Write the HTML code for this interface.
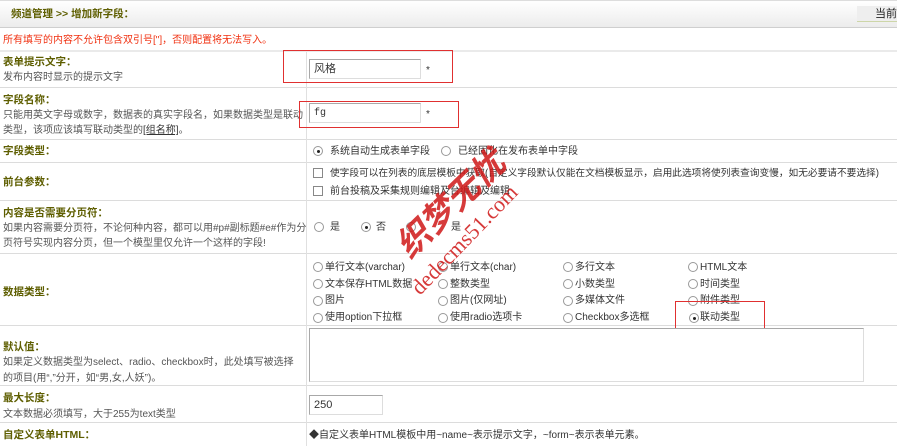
<!DOCTYPE html>
<html><head><meta charset="utf-8">
<style>
*{margin:0;padding:0;box-sizing:border-box}
body{width:906px;height:446px;background:#fff;font-family:"Liberation Sans","Noto Sans CJK SC",sans-serif;font-size:10px;color:#333;position:relative;overflow:hidden}
.a{position:absolute;white-space:nowrap;line-height:13px}
.t{color:#5e5e00;font-weight:bold;font-size:10.5px}
.d{color:#555}
.hl{position:absolute;left:0;width:897px;height:1px;background:#dcdcdc}
.vl{position:absolute;left:306px;width:1px;background:#e0e0e0}
.inp{position:absolute;border:1px solid #a8a8a8;border-right-color:#ddd;border-bottom-color:#ddd;background:#fff;font-size:11px;padding-left:4px;line-height:19px}
.r{position:absolute;width:10px;height:10px;border:1px solid #999;border-radius:50%;background:#fff}
.r.on::after{content:"";position:absolute;left:3px;top:3px;width:3px;height:3px;background:#222;border-radius:50%}
.c{position:absolute;width:10px;height:10px;border:1px solid #888;background:#fff}
.box{position:absolute;border:1px solid #e03030}
</style></head><body>
<div class="a" style="left:0;top:0;width:897px;height:28px;background:linear-gradient(#fff,#ececec);border-top:1px solid #ddd;border-bottom:1px solid #cfcfcf"></div>
<div class="a t" style="left:11px;top:8px">频道管理 &gt;&gt; 增加新字段：</div>
<div class="a" style="left:857px;top:6px;width:40px;height:16px;background:#eee;border-bottom:1px solid #cdd6a8;text-align:right;font-size:11px;color:#222;line-height:16px">当前</div>
<div class="a" style="left:3px;top:34px;color:#f03010">所有填写的内容不允许包含双引号["]，否则配置将无法写入。</div>
<div class="hl" style="top:50px;height:2px;background:#eaeaea"></div>
<div class="hl" style="top:87px"></div>
<div class="hl" style="top:139px"></div>
<div class="hl" style="top:162px"></div>
<div class="hl" style="top:200px"></div>
<div class="hl" style="top:253px"></div>
<div class="hl" style="top:325px"></div>
<div class="hl" style="top:385px"></div>
<div class="hl" style="top:422px"></div>
<div class="vl" style="top:52px;height:394px"></div>

<div class="a t" style="left:3px;top:56px">表单提示文字：</div>
<div class="a d" style="left:3px;top:71px">发布内容时显示的提示文字</div>
<div class="inp" style="left:309px;top:59px;width:112px;height:20px">风格</div>
<div class="a" style="left:426px;top:64px">*</div>
<div class="box" style="left:283px;top:50px;width:170px;height:33px"></div>

<div class="a t" style="left:3px;top:94px">字段名称：</div>
<div class="a d" style="left:3px;top:109px">只能用英文字母或数字，数据表的真实字段名，如果数据类型是联动</div>
<div class="a d" style="left:3px;top:124px">类型，该项应该填写联动类型的<u style="color:#333">[组名称]</u>。</div>
<div class="inp" style="left:309px;top:103px;width:112px;height:20px;font-family:'Liberation Mono',monospace;font-size:10px">fg</div>
<div class="a" style="left:426px;top:108px">*</div>
<div class="box" style="left:299px;top:101px;width:160px;height:27px"></div>

<div class="a t" style="left:3px;top:145px">字段类型：</div>
<div class="r on" style="left:313px;top:146px"></div><div class="a" style="left:330px;top:145px">系统自动生成表单字段</div>
<div class="r" style="left:441px;top:146px"></div><div class="a" style="left:458px;top:145px">已经固化在发布表单中字段</div>

<div class="a t" style="left:3px;top:176px">前台参数：</div>
<div class="c" style="left:313px;top:168px"></div><div class="a" style="left:330px;top:167px;font-size:9.7px">使字段可以在列表的底层模板中获取(自定义字段默认仅能在文档模板显示，启用此选项将使列表查询变慢，如无必要请不要选择)</div>
<div class="c" style="left:313px;top:186px"></div><div class="a" style="left:330px;top:185px">前台投稿及采集规则编辑及台编辑及编辑</div>

<div class="a t" style="left:3px;top:207px">内容是否需要分页符：</div>
<div class="a d" style="left:3px;top:222px">如果内容需要分页符，不论何种内容，都可以用#p#副标题#e#作为分</div>
<div class="a d" style="left:3px;top:237px">页符号实现内容分页，但一个模型里仅允许一个这样的字段!</div>
<div class="r" style="left:314px;top:222px"></div><div class="a" style="left:330px;top:221px">是</div>
<div class="r on" style="left:361px;top:222px"></div><div class="a" style="left:376px;top:221px">否</div>
<div class="r" style="left:406px;top:222px"></div><div class="a" style="left:451px;top:221px">是</div>

<div class="a t" style="left:3px;top:286px">数据类型：</div>
<div class="r" style="left:313px;top:262px"></div><div class="a" style="left:325px;top:261px">单行文本(varchar)</div>
<div class="r" style="left:438px;top:262px"></div><div class="a" style="left:450px;top:261px">单行文本(char)</div>
<div class="r" style="left:563px;top:262px"></div><div class="a" style="left:575px;top:261px">多行文本</div>
<div class="r" style="left:688px;top:262px"></div><div class="a" style="left:700px;top:261px">HTML文本</div>
<div class="r" style="left:313px;top:279px"></div><div class="a" style="left:325px;top:278px">文本保存HTML数据</div>
<div class="r" style="left:438px;top:279px"></div><div class="a" style="left:450px;top:278px">整数类型</div>
<div class="r" style="left:563px;top:279px"></div><div class="a" style="left:575px;top:278px">小数类型</div>
<div class="r" style="left:688px;top:279px"></div><div class="a" style="left:700px;top:278px">时间类型</div>
<div class="r" style="left:313px;top:296px"></div><div class="a" style="left:325px;top:294px">图片</div>
<div class="r" style="left:438px;top:296px"></div><div class="a" style="left:450px;top:294px">图片(仅网址)</div>
<div class="r" style="left:563px;top:296px"></div><div class="a" style="left:575px;top:294px">多媒体文件</div>
<div class="r" style="left:688px;top:296px"></div><div class="a" style="left:700px;top:294px">附件类型</div>
<div class="r" style="left:313px;top:313px"></div><div class="a" style="left:325px;top:311px">使用option下拉框</div>
<div class="r" style="left:438px;top:313px"></div><div class="a" style="left:450px;top:311px">使用radio选项卡</div>
<div class="r" style="left:563px;top:313px"></div><div class="a" style="left:575px;top:311px">Checkbox多选框</div>
<div class="r on" style="left:689px;top:313px"></div><div class="a" style="left:700px;top:311px">联动类型</div>
<div class="box" style="left:675px;top:301px;width:90px;height:29px"></div>

<div class="a t" style="left:3px;top:341px">默认值：</div>
<div class="a d" style="left:3px;top:356px">如果定义数据类型为select、radio、checkbox时，此处填写被选择</div>
<div class="a d" style="left:3px;top:372px">的项目(用“,”分开，如“男,女,人妖”)。</div>
<div class="inp" style="left:309px;top:328px;width:555px;height:54px"></div>

<div class="a t" style="left:3px;top:392px">最大长度：</div>
<div class="a d" style="left:3px;top:408px">文本数据必须填写，大于255为text类型</div>
<div class="inp" style="left:309px;top:395px;width:74px;height:20px">250</div>

<div class="a t" style="left:3px;top:429px">自定义表单HTML：</div>
<div class="a" style="left:309px;top:429px">◆自定义表单HTML模板中用~name~表示提示文字，~form~表示表单元素。</div>

<div class="a" style="left:402px;top:235px;transform:rotate(-44deg);transform-origin:left center;color:#d01818;font-size:34px;line-height:34px;font-weight:bold;font-style:italic;opacity:.85">织梦无忧</div>
<div class="a" style="left:415px;top:280px;transform:rotate(-46deg);transform-origin:left center;color:#d01818;font-size:22px;line-height:22px;font-family:'Liberation Serif',serif;opacity:.85">dedecms51.com</div>
</body></html>
